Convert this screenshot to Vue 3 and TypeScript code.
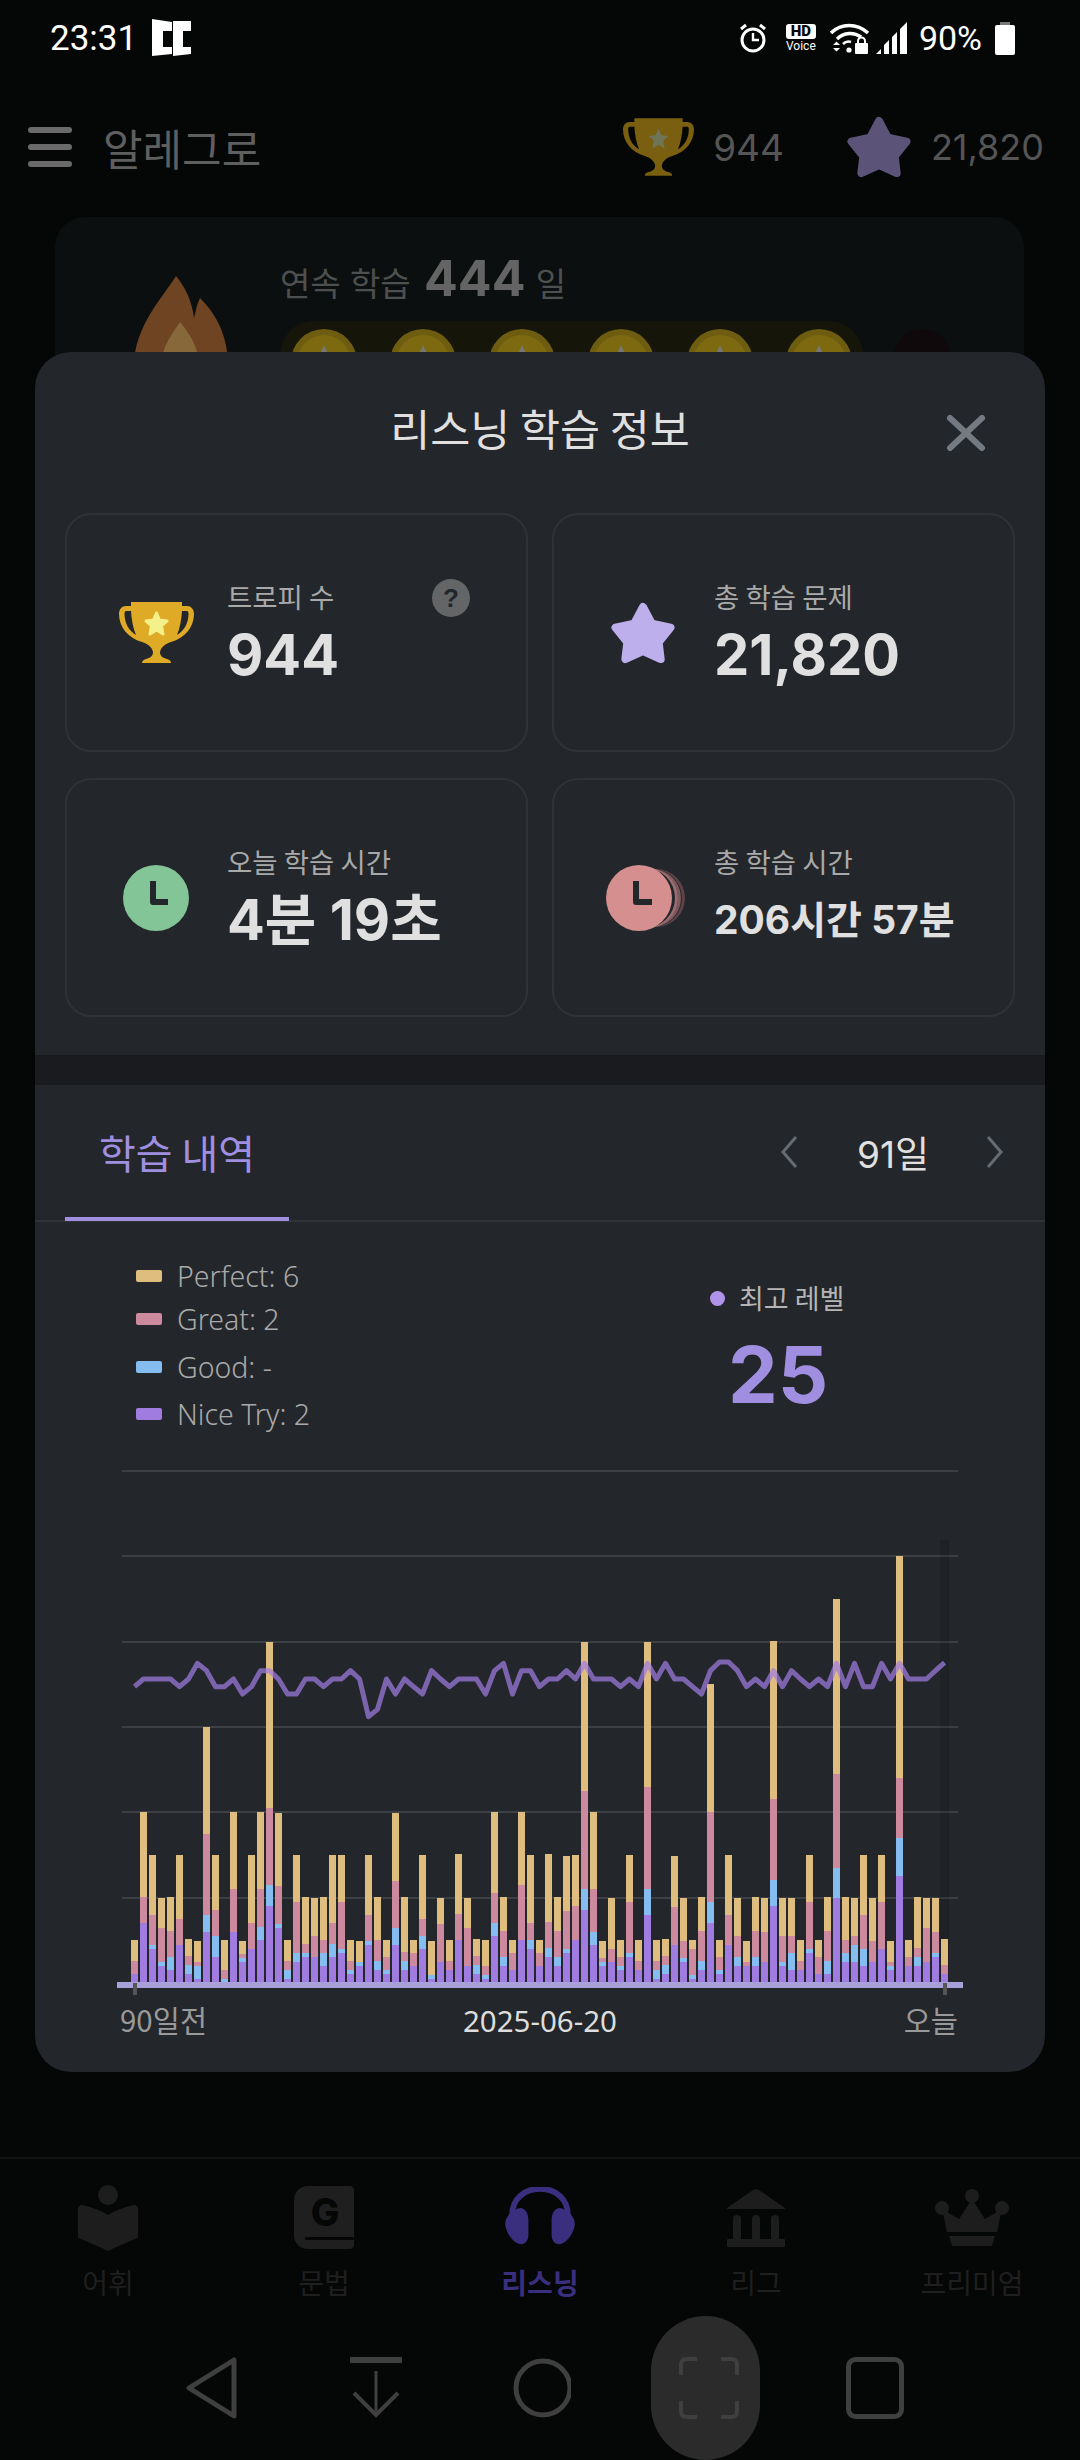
<script setup lang="ts">
const cx = (i: number) => 131 + i * 9
const Z = (v: number) => 1540 + v / 3

// zoomed tops: yellow, pink, blue, purple
const raw: number[][] = [
  [1200,1263,1302,1302],[816,1071,1149,1149],[945,1125,1215,1227],[1074,1164,1266,1278],[1071,1173,1251,1290],[945,1137,1215,1215],[1197,1248,1275,1302],[1203,1266,1278,1317],[561,882,1125,1176],[945,1110,1188,1251],
  [1200,1290,1317,1326],[816,1047,1176,1176],[1203,1242,1254,1266],[945,1149,1227,1227],[816,1047,1161,1200],[306,804,1035,1098],[819,1038,1152,1164],[1200,1263,1290,1317],[945,1086,1239,1266],[1071,1212,1239,1251],
  [1074,1188,1251,1251],[1071,1200,1239,1278],[945,1149,1212,1251],[945,1086,1227,1239],[1200,1263,1290,1302],[1203,1266,1266,1278],[945,1125,1203,1215],[1071,1200,1263,1290],[1200,1251,1290,1302],[819,1023,1164,1215],
  [1071,1236,1263,1290],[1200,1239,1278,1278],[945,1137,1188,1227],[1203,1305,1305,1317],[1074,1152,1266,1266],[1200,1263,1290,1290],[942,1122,1200,1200],[1074,1164,1278,1278],[1197,1248,1275,1302],[1200,1278,1305,1317],
  [816,1059,1149,1188],[1071,1173,1251,1278],[1200,1239,1290,1290],[816,1035,1200,1200],[945,1149,1200,1227],[1200,1239,1278,1278],[942,1146,1224,1251],[1071,1173,1251,1278],[948,1113,1227,1239],[945,1098,1200,1200],
  [306,753,1047,1110],[816,1047,1176,1215],[1203,1254,1266,1278],[1074,1227,1266,1266],[1200,1251,1278,1290],[945,1086,1239,1251],[1200,1263,1290,1290],[306,741,1047,1125],[1200,1263,1290,1317],[1197,1248,1275,1302],
  [948,1101,1215,1215],[1074,1203,1254,1266],[1200,1227,1305,1317],[1071,1173,1263,1290],[432,816,1086,1149],[1200,1251,1290,1302],[945,1125,1215,1215],[1074,1188,1251,1278],[1203,1266,1278,1278],[1071,1173,1251,1278],
  [1074,1176,1266,1266],[303,777,1020,1098],[1074,1188,1266,1278],[1074,1188,1239,1290],[1200,1263,1290,1290],[945,1086,1227,1239],[1200,1251,1302,1302],[1071,1173,1263,1302],[177,702,984,1074],[1071,1200,1239,1266],
  [1074,1188,1215,1266],[945,1125,1227,1278],[1074,1203,1266,1266],[945,1086,1227,1227],[1203,1266,1278,1290],[48,714,894,1008],[1200,1251,1278,1278],[1071,1224,1251,1278],[1074,1164,1266,1266],[1074,1176,1239,1251],[1197,1275,1302,1302]
]
const line: number[] = [440,417,417,417,417,440,417,370,392,440,440,417,462,440,392,392,417,462,462,417,417,440,417,417,392,417,530,508,417,462,417,440,462,392,417,440,417,417,417,462,392,370,462,392,392,440,417,417,392,417,370,417,417,417,440,417,440,370,417,370,417,417,440,462,392,366,366,392,440,417,440,392,440,392,417,440,417,440,370,440,370,440,440,370,417,370,417,417,417,392,368]

const BASE = 1982
const colors = ['#dfbd7e', '#cd8a9f', '#85bdf0', '#a07ce0']
const bars = raw.flatMap((r, i) => {
  const tops = r.map(Z)
  const ends = [tops[1], tops[2], tops[3], BASE]
  return tops.map((t, k) => ({ key: `${i}-${k}`, x: cx(i), y: t, h: Math.max(0, ends[k] - t), fill: colors[k] }))
}).filter(b => b.h > 0)
const linePoints = line.map((v, i) => `${cx(i) + 3.5},${Z(v)}`).join(' ')
const grid = [1471, 1556, 1642, 1727, 1812, 1898]
const coins = [0, 1, 2, 3, 4, 5]
const legend = [
  { name: 'Perfect: 6', color: '#dfbd7e', cls: 'l1' },
  { name: 'Great: 2', color: '#cd8a9f', cls: 'l2' },
  { name: 'Good: -', color: '#85bdf0', cls: 'l3' },
  { name: 'Nice Try: 2', color: '#a07ce0', cls: 'l4' }
]
const starPts = '32,5 41,22 60,26 48,41 50,58 32,50 14,58 16,41 4,26 23,22'
const trophy = 'M12 0 H63 V4 H68 C72 4 75 7 75 12 C75 25 66 36 52 40 C46 42 42 45 41 50 C41 54 44 56 48 57 C51 58 52 59 52 61 H23 C23 59 24 58 27 57 C31 56 34 54 34 50 C33 45 29 42 23 40 C9 36 0 25 0 12 C0 7 3 4 7 4 H12 Z M7 9 C6 9 5.5 10 5.5 12 C5.5 21 10 29 17 33 C14 26 12.5 17 12 9 Z M68 9 H63 C62.5 17 61 26 58 33 C65 29 69.5 21 69.5 12 C69.5 10 69 9 68 9 Z'
const trophyStar = '37.5,11 40.5,18 48,19 42.5,24 44,32 37.5,28 31,32 32.5,24 27,19 34.5,18'
</script>

<template>
  <div class="screen">
    <div class="status">
      <span class="time">23:31</span>
      <svg width="40" height="38" viewBox="0 0 40 38"><path fill="#fff" d="M0 0 L20 3 V12 H11 V28 H20 V35 L0 37 Z M21 2 L39 2 V12 H31 V28 H39 V35 L21 37 Z"/></svg>
      <div class="status-right">
        <svg width="28" height="30" viewBox="0 0 28 30" fill="none" stroke="#fff"><circle cx="14" cy="17" r="11" stroke-width="3"/><path d="M14 10 V17 H20" stroke-width="2.4"/><path d="M2 6 L7 2 M26 6 L21 2" stroke-width="3"/></svg>
        <div class="hd"><span class="hd-box">HD</span><span class="hd-voice">Voice</span></div>
        <svg class="wifi" width="40" height="32" viewBox="0 0 40 32" fill="none" stroke="#fff"><path d="M1 11 C11 1 27 1 38 11" stroke-width="3.4"/><path d="M7 17 C14 10 24 10 31 15" stroke-width="3.4"/><path d="M13 22 C15 20 18 19 21 20" stroke-width="2.6"/><circle cx="19" cy="28" r="2.6" fill="#fff" stroke="none"/><path d="M3 23 l3.5 -3.5 l3.5 3.5z M3 26 l3.5 3.5 l3.5 -3.5z" fill="#fff" stroke="none"/><rect x="25" y="21" width="13" height="11" rx="1" fill="#fff" stroke="none"/><path d="M28 21 v-2 a3.5 3.5 0 0 1 7 0 v2" stroke-width="2"/></svg>
        <svg class="signal" width="33" height="32" viewBox="0 0 33 32"><path fill="#fff" d="M0 32 L5 27 V32Z M8 32 V23 L13 18 V32Z M16 32 V15 L21 10 V32Z M24 32 V7 L31 0 V32Z"/></svg>
        <span class="pct">90%</span>
        <svg width="22" height="33" viewBox="0 0 22 33"><rect x="6" y="0" width="10" height="4" fill="#777"/><rect x="1" y="3" width="20" height="30" rx="2" fill="#fff"/></svg>
      </div>
    </div>

    <div class="appbar">
      <div class="burger"><i></i><i></i><i></i></div>
      <span class="brand">알레그로</span>
      <div class="appbar-right">
        <svg width="71" height="58" viewBox="0 0 75 61"><path :d="trophy" fill="#7a5f10" fill-rule="evenodd"/><polygon :points="trophyStar" fill="#6f7658"/></svg>
        <span class="stat s1">944</span>
        <svg width="66" height="62" viewBox="0 0 64 63"><polygon :points="starPts" fill="#5c5378" stroke="#5c5378" stroke-width="8" stroke-linejoin="round"/></svg>
        <span class="stat s2">21,820</span>
      </div>
    </div>

    <div class="streak">
      <svg class="flame" width="94" height="120" viewBox="0 0 94 120"><path d="M42 0 C30 20 0 50 0 90 V120 H94 V90 C94 62 84 40 66 22 C62 30 62 36 60 42 C58 26 52 12 42 0 Z" fill="#6e4422"/><path d="M46 46 C56 58 65 72 65 90 V120 H27 V90 C27 72 38 58 46 46 Z" fill="#87683a"/></svg>
      <div class="streak-body">
        <div class="streak-title">연속 학습 <b>444</b> 일</div>
        <div class="coins-row">
          <div class="coins"><span v-for="c in coins" :key="c" class="coin"><i></i></span></div>
          <span class="coin-dark"></span>
        </div>
      </div>
    </div>

    <nav class="bottom">
      <div class="tabs-nav">
        <div class="nav-item">
          <svg width="60" height="68" viewBox="0 0 60 68" fill="#1d1d1d"><circle cx="30" cy="11" r="10"/><path d="M4 21 C2 21 0 23 0 25 V52 C0 54 1 55 3 55 L26 65 C28 67 32 67 34 65 L57 55 C59 55 60 54 60 52 V25 C60 23 58 21 56 21 C46 23 38 26 30 31 C22 26 14 23 4 21 Z"/></svg>
          <span>어휘</span>
        </div>
        <div class="nav-item">
          <svg class="mt2" width="60" height="64" viewBox="0 0 60 64"><path d="M14 1 H56 C58 1 60 3 60 5 V60 C60 62 58 64 56 64 H14 C6 64 0 58 0 50 V15 C0 7 6 1 14 1 Z" fill="#1f1f1f"/><rect x="11" y="52" width="49" height="3" rx="1.5" fill="#050606"/><text x="31" y="41" text-anchor="middle" class="g">G</text></svg>
          <span>문법</span>
        </div>
        <div class="nav-item active">
          <svg class="mt3" width="70" height="58" viewBox="0 0 72 60" fill="#3a2f7f"><path d="M7 38 V30 C7 12 20 2 36 2 C52 2 65 12 65 30 V38" fill="none" stroke="#3a2f7f" stroke-width="6"/><path d="M10 24 C17 18 24 24 24 34 V50 C24 56 20 60 15 59 C8 58 0 46 0 38 C0 32 5 26 10 24 Z"/><path d="M62 24 C55 18 48 24 48 34 V50 C48 56 52 60 57 59 C64 58 72 46 72 38 C72 32 67 26 62 24 Z"/></svg>
          <span>리스닝</span>
        </div>
        <div class="nav-item">
          <svg class="mt5" width="58" height="58" viewBox="0 0 58 58" fill="#1d1d1d"><path d="M26 1 C28 0 30 0 32 1 L58 19 V20 H0 V19 Z"/><rect x="6" y="26" width="8" height="26" rx="4"/><rect x="25" y="26" width="8" height="26" rx="4"/><rect x="44" y="26" width="8" height="26" rx="4"/><rect y="50" width="58" height="8" rx="1"/></svg>
          <span>리그</span>
        </div>
        <div class="nav-item">
          <svg class="mt5" width="74" height="58" viewBox="0 0 74 58" fill="#1d1d1d"><circle cx="37" cy="7" r="7"/><circle cx="7" cy="19" r="7"/><circle cx="67" cy="19" r="7"/><path d="M37 10 L50 30 L67 20 L62 43 H12 L7 20 L24 30 Z"/><path d="M14 47 H60 L57 57 H17 Z"/></svg>
          <span>프리미엄</span>
        </div>
      </div>
      <div class="sysbar">
        <svg class="back" width="52" height="62" viewBox="0 0 52 62" fill="none" stroke="#3f3f3f" stroke-width="5" stroke-linejoin="round"><path d="M48 3 V59 L3 31 Z"/></svg>
        <svg class="dl" width="52" height="62" viewBox="0 0 52 62" fill="none" stroke="#3f3f3f"><path d="M0 3 H52" stroke-width="6"/><path d="M26 14 V58" stroke-width="3"/><path d="M4 36 L26 58 L48 36" stroke-width="4"/></svg>
        <svg class="circ" width="60" height="62" viewBox="0 0 60 62" fill="none" stroke="#3f3f3f" stroke-width="5"><circle cx="32" cy="31" r="27"/></svg>
        <div class="capture">
          <svg width="60" height="62" viewBox="0 0 60 62" fill="none" stroke="#3f3f3f" stroke-width="4"><path d="M2 18 V8 C2 4 4 2 8 2 H18 M42 2 H52 C56 2 58 4 58 8 V18 M58 44 V54 C58 58 56 60 52 60 H42 M18 60 H8 C4 60 2 58 2 54 V44"/></svg>
        </div>
        <svg class="sq" width="60" height="62" viewBox="0 0 60 62" fill="none" stroke="#3f3f3f" stroke-width="5"><rect x="2.5" y="2.5" width="53" height="57" rx="7"/></svg>
      </div>
    </nav>

    <section class="sheet">
      <header class="sheet-head">
        <h1>리스닝 학습 정보</h1>
        <svg class="close" width="38" height="36" viewBox="0 0 38 36" fill="none" stroke="#737a81" stroke-width="6" stroke-linecap="round"><path d="M3 3 L35 33 M35 3 L3 33"/></svg>
      </header>

      <div class="cards">
        <div class="card">
          <div class="icon">
            <svg class="trophy" width="75" height="61" viewBox="0 0 75 61"><path :d="trophy" fill="#dfaa26" fill-rule="evenodd"/><polygon :points="trophyStar" fill="#f4f08a" stroke="#f4f08a" stroke-width="3" stroke-linejoin="round"/></svg>
          </div>
          <div class="text"><span class="label">트로피 수</span><strong class="value">944</strong></div>
          <span class="help">?</span>
        </div>
        <div class="card">
          <div class="icon">
            <svg width="66" height="62" viewBox="0 0 64 63"><polygon :points="starPts" fill="#bdaeec" stroke="#bdaeec" stroke-width="8" stroke-linejoin="round"/></svg>
          </div>
          <div class="text"><span class="label">총 학습 문제</span><strong class="value">21,820</strong></div>
        </div>
        <div class="card">
          <div class="icon">
            <svg width="66" height="66" viewBox="0 0 66 66"><circle cx="33" cy="33" r="33" fill="#83c596"/><path d="M30 16 V37 H45" fill="none" stroke="#23262a" stroke-width="6" stroke-linejoin="round"/></svg>
          </div>
          <div class="text"><span class="label">오늘 학습 시간</span><strong class="value">4분 19초</strong></div>
        </div>
        <div class="card">
          <div class="icon">
            <svg class="pink" width="82" height="66" viewBox="0 0 82 66"><circle cx="50" cy="33" r="29" fill="#5f4347"/><circle cx="47" cy="33" r="29" fill="#23262a"/><circle cx="46" cy="33" r="29" fill="#7d5a5e"/><circle cx="43" cy="33" r="29" fill="#23262a"/><circle cx="42" cy="33" r="30" fill="#9a6d70"/><circle cx="39" cy="33" r="30" fill="#23262a"/><circle cx="33" cy="33" r="33" fill="#d58f8f"/><path d="M30 16 V37 H46" fill="none" stroke="#23262a" stroke-width="6" stroke-linejoin="round"/></svg>
          </div>
          <div class="text"><span class="label">총 학습 시간</span><strong class="value small">206시간 57분</strong></div>
        </div>
      </div>

      <div class="band"></div>

      <div class="tabs">
        <span class="tab">학습 내역</span>
        <div class="range">
          <svg width="18" height="32" viewBox="0 0 18 32" fill="none" stroke="#656c73" stroke-width="3"><path d="M16 1 L3 16 L16 31"/></svg>
          <span class="range-val">91일</span>
          <svg width="18" height="32" viewBox="0 0 18 32" fill="none" stroke="#656c73" stroke-width="3"><path d="M2 1 L15 16 L2 31"/></svg>
        </div>
      </div>

      <div class="summary">
        <ul class="legend">
          <li v-for="l in legend" :key="l.name" :class="l.cls"><i :style="{ background: l.color }"></i>{{ l.name }}</li>
        </ul>
        <div class="best">
          <div class="best-label"><i></i>최고 레벨</div>
          <div class="best-val">25</div>
        </div>
      </div>

      <svg class="chart" width="1010" height="580" viewBox="35 1462 1010 580">
        <line v-for="g in grid" :key="g" x1="122" x2="958" :y1="g" :y2="g" stroke="#3c4044" stroke-width="2"/>
        <rect x="940" y="1540" width="9" height="442" fill="#000" opacity="0.1"/>
        <rect v-for="b in bars" :key="b.key" :x="b.x" :y="b.y" width="7" :height="b.h" :fill="b.fill"/>
        <polyline :points="linePoints" fill="none" stroke="#a07ce0" stroke-opacity="0.72" stroke-width="5" stroke-linejoin="round"/>
        <rect x="117" y="1982" width="846" height="6" fill="#a8a0d8"/>
        <rect x="133" y="1983" width="4" height="12" fill="#555"/>
        <rect x="943" y="1983" width="4" height="12" fill="#555"/>
        <text x="120" y="2032" class="axis">90일전</text>
        <text x="540" y="2032" text-anchor="middle" class="axis date">2025-06-20</text>
        <text x="958" y="2032" text-anchor="end" class="axis">오늘</text>
      </svg>
    </section>
  </div>
</template>

<style>
html, body { margin: 0; background: #050606; }
</style>

<style scoped>
.screen {
  position: relative;
  width: 1080px;
  height: 2460px;
  overflow: hidden;
  display: flex;
  flex-direction: column;
  background: #050606;
  font-family: Inter, "Noto Sans CJK KR", "Noto Sans", sans-serif;
}
.status {
  display: flex;
  align-items: center;
  height: 76px;
  padding: 0 64px 0 50px;
  color: #fff;
  box-sizing: border-box;
}
.time { font: 400 35px Roboto, sans-serif; width: 102px; }
.status-right { margin-left: auto; display: flex; align-items: center; }
.pct { font: 400 34px Roboto, sans-serif; margin: 0 12px 0 10px; }
.hd { display: flex; flex-direction: column; align-items: center; margin: 0 14px 0 19px; font-family: Roboto, sans-serif; line-height: 1; width: 30px; }
.hd-box { background: #fff; color: #050606; font-size: 15px; font-weight: 900; border-radius: 3px; padding: 0 5px; }
.hd-voice { font-size: 12px; margin-top: 1px; }
.signal { margin-left: 6px; }

.appbar {
  display: flex;
  align-items: center;
  height: 90px;
  margin-top: 26px;
  padding: 0 36px 0 28px;
  box-sizing: border-box;
  color: #5f5f5f;
}
.burger { display: flex; flex-direction: column; gap: 11px; width: 44px; }
.burger i { display: block; height: 6px; border-radius: 3px; background: #6a6a6a; }
.brand { font-size: 43px; margin-left: 31px; }
.appbar-right { margin-left: auto; display: flex; align-items: center; }
.stat { font: 400 37px Inter, sans-serif; color: #555; }
.stat.s1 { margin: 0 62px 0 19px; }
.stat.s2 { margin-left: 19px; font-size: 36px; }

.streak {
  display: flex;
  margin: 25px 56px 0 55px;
  height: 300px;
  padding: 30px 0 0 79px;
  box-sizing: border-box;
  background: #0c0f0f;
  border-radius: 30px;
  gap: 52px;
}
.flame { margin-top: 29px; }
.streak-title { font-size: 33px; color: #4e4f4f; line-height: 62px; height: 66px; }
.streak-title b { font-size: 50px; color: #646464; margin: 0 1px 0 4px; font-weight: 700; }
.coins-row { display: flex; gap: 30px; margin-top: 8px; }
.coins { display: flex; gap: 33px; padding: 8px 11px; background: #15150a; border-radius: 34px; height: 100px; box-sizing: border-box; }
.coin { position: relative; display: block; width: 66px; height: 66px; border-radius: 50%; background: #6e5d10; }
.coin i { position: absolute; inset: 6px; border-radius: 50%; background: #7d6a10; }
.coin i::after { content: ""; position: absolute; left: 23px; top: 10px; border: 4px solid transparent; border-top-width: 0; border-bottom: 9px solid #777; }
.coin-dark { display: block; width: 58px; height: 58px; border-radius: 50%; background: #0f090b; margin-top: 8px; }

.bottom { margin-top: auto; border-top: 2px solid #121313; height: 303px; box-sizing: border-box; display: flex; flex-direction: column; font-family: "Noto Sans CJK KR", sans-serif; }
.tabs-nav { display: grid; grid-template-columns: repeat(5, 216px); height: 157px; }
.nav-item { display: flex; flex-direction: column; align-items: center; justify-content: flex-start; padding-top: 25px; box-sizing: border-box; color: #1f1f1f; font-size: 28px; position: relative; }
.nav-item .mt2 { margin-top: 1px; }
.nav-item .mt3 { margin-top: 3px; }
.nav-item .mt5 { margin-top: 5px; }
.nav-item span { position: absolute; top: 103px; line-height: 40px; }
.nav-item.active { color: #3a2f7f; font-weight: 700; }
.g { font: 800 38px Inter, sans-serif; fill: #050606; }
.sysbar { display: flex; align-items: center; flex: 1; padding-left: 186px; }
.dl { margin-left: 112px; }
.circ { margin-left: 109px; }
.capture { width: 109px; height: 144px; margin-left: 80px; align-self: flex-end; border-radius: 55px; background: #2b2b2b; display: flex; align-items: center; justify-content: center; }
.capture svg { margin-left: 7px; }
.sq { margin-left: 86px; }

.sheet {
  position: absolute;
  left: 35px;
  top: 352px;
  width: 1010px;
  height: 1720px;
  background: #23262a;
  border-radius: 36px;
  overflow: hidden;
  color: #e0e0e0;
}
.sheet-head { position: relative; height: 161px; display: flex; justify-content: center; padding-top: 44px; box-sizing: border-box; }
.sheet-head h1 { margin: 0; font-family: "Noto Sans CJK KR", sans-serif; font-size: 43.5px; line-height: 64px; font-weight: 400; color: #e0e0e0; }
.close { position: absolute; left: 912px; top: 63px; }
.cards { display: grid; grid-template-columns: 463px 463px; grid-auto-rows: 239px; gap: 26px 24px; padding: 0 30px; }
.card { position: relative; display: flex; align-items: center; border: 2px solid #2f3236; border-radius: 26px; box-sizing: border-box; }
.icon { width: 160px; padding-left: 17px; box-sizing: border-box; display: flex; justify-content: center; flex: none; }
.trophy { margin-left: 2px; }
.pink { margin-left: 8px; }
.text { display: flex; flex-direction: column; padding-top: 2px; }
.label { font-family: "Noto Sans CJK KR", sans-serif; font-size: 27.5px; line-height: 40px; color: #a9a9a9; }
.value { margin-top: 2px; font-size: 56px; line-height: 74px; font-weight: 700; color: #e0e0e0; }
.value.small { font-size: 39px; line-height: 74px; }
.help { position: absolute; left: 365px; top: 64px; width: 38px; height: 38px; border-radius: 50%; background: #636567; color: #23262a; font: 700 26px/38px "Liberation Sans", sans-serif; text-align: center; }
.band { height: 30px; margin-top: 38px; background: #1a1b1e; }
.tabs { display: flex; align-items: center; justify-content: space-between; height: 137px; padding: 0 41px 2px 30px; box-sizing: border-box; border-bottom: 2px solid #2f3236; }
.tab { position: relative; width: 224px; text-align: center; font-family: "Noto Sans CJK KR", sans-serif; font-size: 40px; line-height: 58px; color: #a08fe0; }
.tab::after { content: ""; position: absolute; left: 0; right: 0; top: 94px; height: 4px; background: #a08fe0; }
.range { display: flex; align-items: center; }
.range-val { width: 188px; padding-left: 2px; box-sizing: border-box; text-align: center; font-size: 37px; color: #e0e0e0; }
.summary { display: flex; height: 240px; padding: 0 0 0 101px; box-sizing: border-box; }
.legend { list-style: none; margin: 0; padding: 0; width: 574px; font: 300 28.5px "Noto Sans", sans-serif; color: #a9a9a9; }
.legend li { display: flex; align-items: center; height: 44px; }
.legend li i { width: 26px; height: 12px; border-radius: 2px; margin-right: 15px; }
.legend .l1 { margin-top: 32px; }
.legend .l2 { margin-top: -1px; }
.legend .l3 { margin-top: 4px; }
.legend .l4 { margin-top: 3px; }
.best { margin-top: 56px; }
.best-label { display: flex; align-items: center; font-family: "Noto Sans CJK KR", sans-serif; font-size: 27px; line-height: 40px; color: #b5b5b5; }
.best-label i { width: 15px; height: 15px; border-radius: 50%; background: #b094ea; margin-right: 14px; }
.best-val { margin: 8px 0 0 18px; font-size: 79px; line-height: 96px; font-weight: 700; color: #a08fe0; }
.chart { display: block; }
.axis { font: 400 29.5px "Noto Sans CJK KR", sans-serif; fill: #999; }
.axis.date { fill: #ddd; font-family: "Noto Sans", sans-serif; font-size: 29.5px; }
</style>
